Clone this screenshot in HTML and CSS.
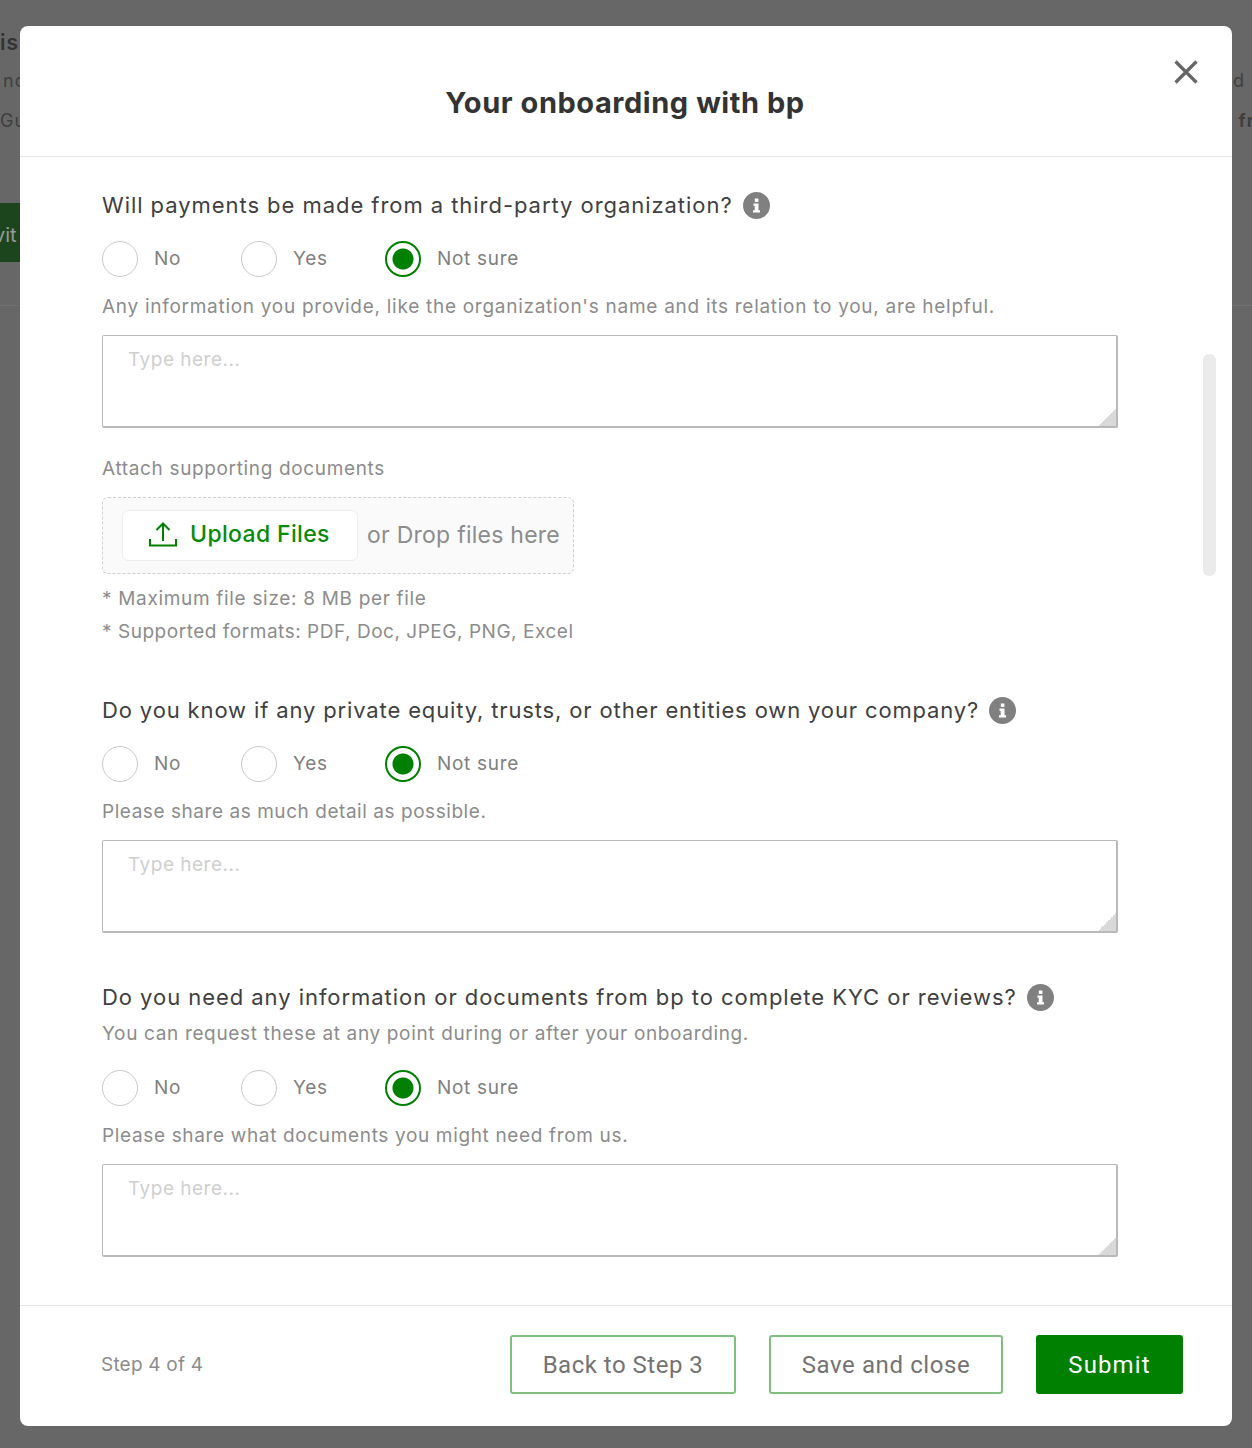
FILE: index.html
```html
<!DOCTYPE html>
<html lang="en">
<head>
<meta charset="utf-8">
<title>Your onboarding with bp</title>
<link rel="stylesheet" href="styles.css">
</head>
<body>
<div class="page">
  <div class="page-line page-line-title"><span>is</span><span></span></div>
  <div class="page-line page-line-a"><span>nc</span><span>d</span></div>
  <div class="page-line page-line-b"><span>Gu</span><span class="page-strong">: fr</span></div>
  <div class="page-cta">vit</div>
  <div class="page-rule"></div>
</div>
<div class="modal">
  <header class="modal-head">
    <h1 class="modal-title">Your onboarding with bp</h1>
    <button class="close" aria-label="Close">
      <svg width="26" height="26" viewBox="0 0 26 26"><path d="M2.500 2.500 L23.500 23.500 M23.500 2.500 L2.500 23.500" stroke="#666" stroke-width="3.200" fill="none"/></svg>
    </button>
  </header>
  <main class="modal-body">
    <section class="block block-first">
      <div class="question">Will payments be made from a third-party organization?
        <svg class="info" viewBox="0 0 27 27"><circle cx="13.500" cy="13.500" r="13.500" fill="#808080"/><rect x="11.800" y="6.500" width="3.600" height="3.400" fill="#fff"/><path d="M10.500 11.500h5v6.700h1.500v2.300h-7v-2.300h1.700v-4.400h-1.200z" fill="#fff"/></svg>
      </div>
      <div class="radios">
        <label class="option"><input type="radio" name="q1"><span>No</span></label>
        <label class="option"><input type="radio" name="q1"><span>Yes</span></label>
        <label class="option"><input type="radio" name="q1" checked><span>Not sure</span></label>
      </div>
      <p class="help help-long">Any information you provide, like the organization's name and its relation to you, are helpful.</p>
      <div class="field"><textarea placeholder="Type here..."></textarea></div>
      <p class="attach">Attach supporting documents</p>
      <div class="drop">
        <button class="upload">
          <svg width="30" height="27" viewBox="0 0 30 27"><path d="M15 20 V2.500 M8.500 9 L15 2.500 L21.500 9 M2 18 V24.500 H28 V18" stroke="#008000" stroke-width="2" fill="none"/></svg>
          Upload Files
        </button>
        <span class="drop-text">or Drop files here</span>
      </div>
      <p class="note note-first">* Maximum file size: 8 MB per file</p>
      <p class="note">* Supported formats: PDF, Doc, JPEG, PNG, Excel</p>
    </section>
    <section class="block block-second">
      <div class="question question-tight">Do you know if any private equity, trusts, or other entities own your company?
        <svg class="info" viewBox="0 0 27 27"><circle cx="13.500" cy="13.500" r="13.500" fill="#808080"/><rect x="11.800" y="6.500" width="3.600" height="3.400" fill="#fff"/><path d="M10.500 11.500h5v6.700h1.500v2.300h-7v-2.300h1.700v-4.400h-1.200z" fill="#fff"/></svg>
      </div>
      <div class="radios">
        <label class="option"><input type="radio" name="q2"><span>No</span></label>
        <label class="option"><input type="radio" name="q2"><span>Yes</span></label>
        <label class="option"><input type="radio" name="q2" checked><span>Not sure</span></label>
      </div>
      <p class="help help-short">Please share as much detail as possible.</p>
      <div class="field"><textarea placeholder="Type here..."></textarea></div>
    </section>
    <section class="block block-third">
      <div class="question">Do you need any information or documents from bp to complete KYC or reviews?
        <svg class="info" viewBox="0 0 27 27"><circle cx="13.500" cy="13.500" r="13.500" fill="#808080"/><rect x="11.800" y="6.500" width="3.600" height="3.400" fill="#fff"/><path d="M10.500 11.500h5v6.700h1.500v2.300h-7v-2.300h1.700v-4.400h-1.200z" fill="#fff"/></svg>
      </div>
      <p class="sub">You can request these at any point during or after your onboarding.</p>
      <div class="radios radios-after-sub">
        <label class="option"><input type="radio" name="q3"><span>No</span></label>
        <label class="option"><input type="radio" name="q3"><span>Yes</span></label>
        <label class="option"><input type="radio" name="q3" checked><span>Not sure</span></label>
      </div>
      <p class="help">Please share what documents you might need from us.</p>
      <div class="field"><textarea placeholder="Type here..."></textarea></div>
    </section>
    <div class="scrollbar"></div>
  </main>
  <footer class="modal-foot">
    <span class="step">Step 4 of 4</span>
    <div class="actions">
      <button class="btn btn-back">Back to Step 3</button>
      <button class="btn btn-save">Save and close</button>
      <button class="btn btn-primary">Submit</button>
    </div>
  </footer>
</div>
</body>
</html>
```
FILE: styles.css
```css
* { box-sizing: border-box; }
html, body { margin: 0; padding: 0; }
body {
  width: 1252px;
  height: 1448px;
  overflow: hidden;
  background: #676767;
  font-family: Inter, "Liberation Sans", sans-serif;
  position: relative;
}

/* dimmed page behind the dialog */
.page { height: 1448px; padding-top: 30px; color: #3f3f3f; overflow: hidden; }
.page-line { display: flex; justify-content: space-between; font-size: 18px; letter-spacing: 1px; }
.page-line-title { height: 30px; font-size: 21px; font-weight: 600; color: #333; }
.page-line-a { margin-top: 10px; height: 20px; padding: 0 7px 0 3px; }
.page-line-b { margin-top: 20px; height: 20px; margin-right: -3px; }
.page-strong { font-weight: 700; word-spacing: 3px; }
.page-cta {
  margin-top: 73px;
  width: 20px;
  height: 59px;
  background: #1d451d;
  color: #999;
  font-size: 20px;
  line-height: 65px;
  text-indent: -6px;
  overflow: hidden;
}
.page-rule { margin-top: 43px; height: 1px; background: #6f6f6f; }

/* dialog */
.modal {
  position: absolute;
  left: 20px;
  top: 26px;
  width: 1212px;
  height: 1400px;
  background: #fff;
  border-radius: 8px;
  display: flex;
  flex-direction: column;
  overflow: hidden;
}
.modal-head {
  height: 131px;
  flex: none;
  border-bottom: 1px solid #e6e6e6;
  display: flex;
  justify-content: center;
  align-items: flex-start;
  position: relative;
}
.modal-title {
  margin: 58px 0 0;
  font-size: 29px;
  line-height: 37px;
  font-weight: 700;
  letter-spacing: 0.55px;
  color: #333;
  transform: translateX(-1px);
}
.close {
  position: absolute;
  top: 33px;
  right: 33px;
  width: 26px;
  height: 26px;
  padding: 0;
  border: 0;
  background: none;
  display: block;
}
.close svg { display: block; }

.modal-body {
  flex: 1;
  padding: 33px 114px 0 82px;
  position: relative;
  overflow: hidden;
}
.scrollbar {
  position: absolute;
  left: 1183px;
  top: 197px;
  width: 13px;
  height: 222px;
  background: #ebebeb;
  border-radius: 6px;
}
.block-second { margin-top: 47px; }
.block-third { margin-top: 49px; }

.question {
  display: flex;
  align-items: center;
  height: 30px;
  font-size: 22px;
  line-height: 30px;
  color: #404040;
  letter-spacing: 0.95px;
  white-space: nowrap;
}
.question-tight { letter-spacing: 0.86px; }
.info { width: 27px; height: 27px; margin-left: 10px; flex: none; }
.sub {
  margin: 11px 0 0;
  font-size: 19px;
  line-height: 22px;
  letter-spacing: 0.65px;
  color: #8c8c8c;
}

.radios {
  display: grid;
  grid-template-columns: 139px 144px auto;
  margin-top: 20px;
  height: 36px;
}
.radios-after-sub { margin-top: 24px; }
.option {
  display: flex;
  align-items: center;
  gap: 16px;
  font-size: 19px;
  line-height: 38px;
  color: #808080;
  letter-spacing: 0.7px;
}
.option input {
  appearance: none;
  margin: 0;
  width: 36px;
  height: 36px;
  border-radius: 50%;
  border: 1px solid #c8c8c8;
  background: #fff;
  flex: none;
}
.option input:checked {
  border: 2px solid #008000;
  background: radial-gradient(circle, #008000 0 10px, #fff 11px);
}

.help {
  margin: 20px 0 0;
  font-size: 19px;
  line-height: 22px;
  letter-spacing: 0.65px;
  color: #8c8c8c;
  white-space: nowrap;
}
.help-long { letter-spacing: 0.72px; }
.help-short { letter-spacing: 0.55px; }
.field { position: relative; margin-top: 17px; height: 93px; }
.field::after {
  content: "";
  position: absolute;
  right: 2px;
  bottom: 2px;
  width: 18px;
  height: 18px;
  background: linear-gradient(135deg, transparent 50%, #d9d9d9 50%);
}
textarea {
  display: block;
  width: 100%;
  height: 100%;
  resize: none;
  border: 1px solid #b9b9b9;
  border-bottom-width: 2px;
  border-right-width: 2px;
  border-radius: 2px;
  padding: 13px 25px;
  font: 19px/22px Inter, "Liberation Sans", sans-serif;
  letter-spacing: 0.5px;
  outline: 0;
}
textarea::placeholder { color: #cfcfcf; opacity: 1; }

.attach {
  margin: 30px 0 0;
  font-size: 19px;
  line-height: 22px;
  letter-spacing: 0.65px;
  color: #8c8c8c;
}
.drop {
  margin-top: 17px;
  width: 472px;
  height: 77px;
  border: 1px dashed #d0d0d0;
  border-radius: 6px;
  background: #fafafa;
  display: flex;
  align-items: center;
  padding-left: 19px;
  gap: 9px;
}
.upload {
  width: 236px;
  height: 51px;
  background: #fff;
  border: 1px solid #ececec;
  border-radius: 6px;
  color: #0a8a0a;
  font: 500 23px/27px Inter, "Liberation Sans", sans-serif;
  letter-spacing: 0.35px;
  display: flex;
  align-items: center;
  gap: 12px;
  padding: 0 0 2px 25px;
  white-space: nowrap;
}
.drop-text {
  font-size: 23px;
  line-height: 26px;
  padding-bottom: 2px;
  color: #8c8c8c;
  letter-spacing: 0.25px;
  white-space: nowrap;
}
.note {
  margin: 0;
  font-size: 19px;
  line-height: 33px;
  letter-spacing: 0.53px;
  color: #8c8c8c;
  white-space: nowrap;
}
.note-first { margin-top: 8px; letter-spacing: 0.68px; }

.modal-foot {
  flex: none;
  height: 121px;
  border-top: 1px solid #e6e6e6;
  display: flex;
  align-items: center;
  justify-content: space-between;
  padding: 0 49px 3px 82px;
}
.step { font-size: 19px; line-height: 22px; color: #8c8c8c; letter-spacing: 0.2px; margin-left: -1px; }
.actions { display: flex; gap: 33px; }
.btn {
  height: 59px;
  border-radius: 3px;
  border: 2px solid #80bf80;
  background: #fff;
  color: #737373;
  font: 400 24px Roboto, "Liberation Sans", sans-serif;
  letter-spacing: 0.5px;
  padding: 0;
}
.btn-back { width: 226px; }
.btn-save { width: 234px; letter-spacing: 0.6px; }
.btn-primary { width: 147px; background: #008000; border-color: #008000; color: #fff; letter-spacing: 1.1px; }
```
